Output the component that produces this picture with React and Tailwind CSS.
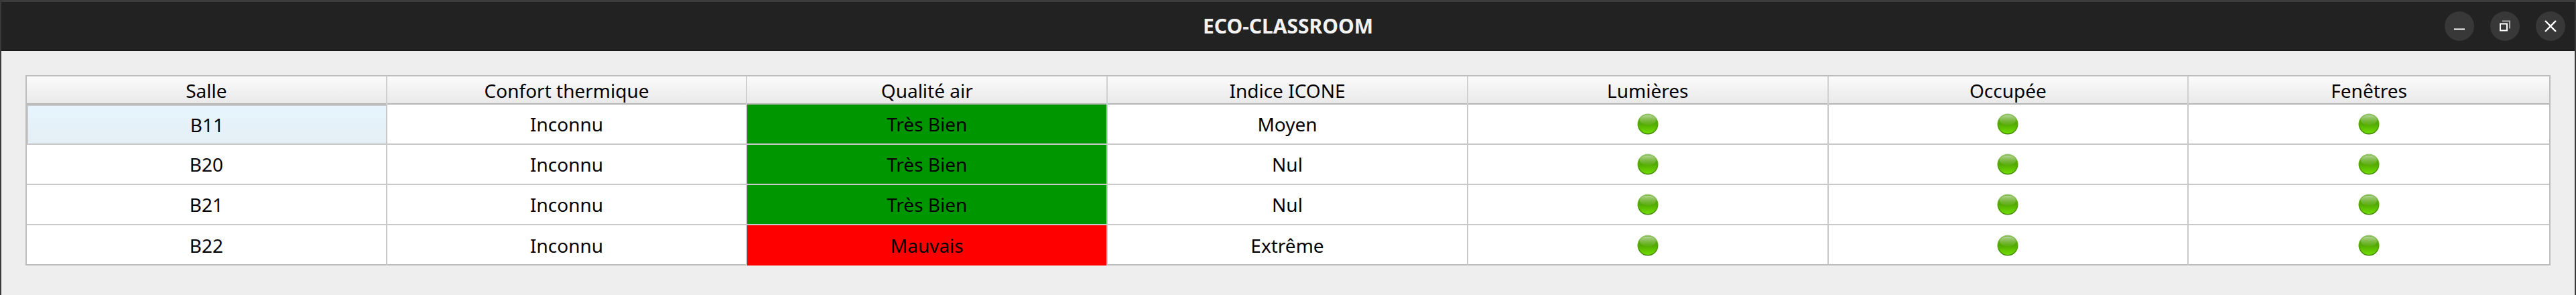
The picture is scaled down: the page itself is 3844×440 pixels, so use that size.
import React from 'react';

const columns = ['Salle', 'Confort thermique', 'Qualité air', 'Indice ICONE', 'Lumières', 'Occupée', 'Fenêtres'];

const rows = [
  { salle: 'B11', air: 'Très Bien', icone: 'Moyen' },
  { salle: 'B20', air: 'Très Bien', icone: 'Nul' },
  { salle: 'B21', air: 'Très Bien', icone: 'Nul' },
  { salle: 'B22', air: 'Mauvais', icone: 'Extrême' },
];

const Led = () => (
  <svg width="32" height="32" viewBox="0 0 32 32">
    <defs>
      <linearGradient id="ledRim" x1="0" y1="0" x2="0" y2="1">
        <stop offset="0" stopColor="#9cc97a" />
        <stop offset="0.5" stopColor="#56a800" />
        <stop offset="1" stopColor="#3c8200" />
      </linearGradient>
      <linearGradient id="ledBody" x1="0" y1="0" x2="0" y2="1">
        <stop offset="0" stopColor="#5aa614" />
        <stop offset="0.5" stopColor="#52aa00" />
        <stop offset="1" stopColor="#70dc00" />
      </linearGradient>
      <linearGradient id="ledShine" x1="0" y1="0" x2="0" y2="1">
        <stop offset="0" stopColor="#cfe3bd" stopOpacity="0.8" />
        <stop offset="1" stopColor="#7cb840" stopOpacity="0.25" />
      </linearGradient>
    </defs>
    <circle cx="16" cy="16" r="15.5" fill="url(#ledRim)" />
    <circle cx="16" cy="16" r="14" fill="url(#ledBody)" />
    <ellipse cx="16" cy="10" rx="12" ry="7.5" fill="url(#ledShine)" />
  </svg>
);

const Cell = ({ children, className = '' }) => (
  <div className={`flex items-center justify-center min-w-0 h-[60px] border-b-2 border-r-2 border-[#c8c8c8] last:border-r-0 ${className}`}>
    {children}
  </div>
);

const WindowButton = ({ children }) => (
  <div className="w-[44px] h-[44px] rounded-full bg-[#383838] flex items-center justify-center">
    <svg width="24" height="24" viewBox="0 0 24 24" fill="none">{children}</svg>
  </div>
);

export default function App() {
  return (
    <div className="w-[3844px] h-[440px] flex flex-col bg-[#eeeeee] border-x-2 border-[#3a3a3a] text-[28px] text-black font-['Noto_Sans',sans-serif] overflow-hidden">
      {/* Title bar */}
      <div className="relative h-[76px] shrink-0 flex items-center justify-end pr-[14px] bg-[#222222] border-t-[3px] border-b-2 border-t-[#3c3c3c] border-b-[#1b1b1b]">
        <div className="absolute inset-0 flex items-center justify-center text-[30px] font-bold text-[#f2f2f2]">
          ECO-CLASSROOM
        </div>
        <div className="relative flex gap-6">
          <WindowButton>
            <rect x="4" y="15.5" width="16" height="2" fill="#fff" />
          </WindowButton>
          <WindowButton>
            <path d="M8 4.5H19V15.5" stroke="#aaaaaa" strokeWidth="2" />
            <rect x="5" y="8.5" width="10" height="10" stroke="#fff" strokeWidth="2" />
          </WindowButton>
          <WindowButton>
            <path d="M4 4L20 20M20 4L4 20" stroke="#fff" strokeWidth="2.4" />
          </WindowButton>
        </div>
      </div>

      {/* Table */}
      <div className="mt-[36px] ml-[36px] w-[3768px] border-2 border-[#bdbdbd] bg-white">
        <div className="grid grid-cols-7 h-[42px] bg-gradient-to-b from-[#fbfbfb] to-[#e9e9e9] border-b-2 border-[#b5b5b5]">
          {columns.map((name) => (
            <div key={name} className="flex items-center justify-center border-r-2 border-[#d0d0d0] last:border-r-0">
              {name}
            </div>
          ))}
        </div>
        {rows.map((row, i) => (
          <div key={row.salle} className="grid grid-cols-7 last:[&>div]:border-b-0 last:h-[58px]">
            <Cell className={i === 0 ? 'bg-gradient-to-b from-[#e6f5fe] to-[#e5eef5] border-2 border-[#bcc5cf]' : ''}>{row.salle}</Cell>
            <Cell>Inconnu</Cell>
            <Cell className={row.air === 'Mauvais' ? 'bg-[#ff0000]' : 'bg-[#009600]'}>{row.air}</Cell>
            <Cell>{row.icone}</Cell>
            <Cell><Led /></Cell>
            <Cell><Led /></Cell>
            <Cell><Led /></Cell>
          </div>
        ))}
      </div>
    </div>
  );
}
